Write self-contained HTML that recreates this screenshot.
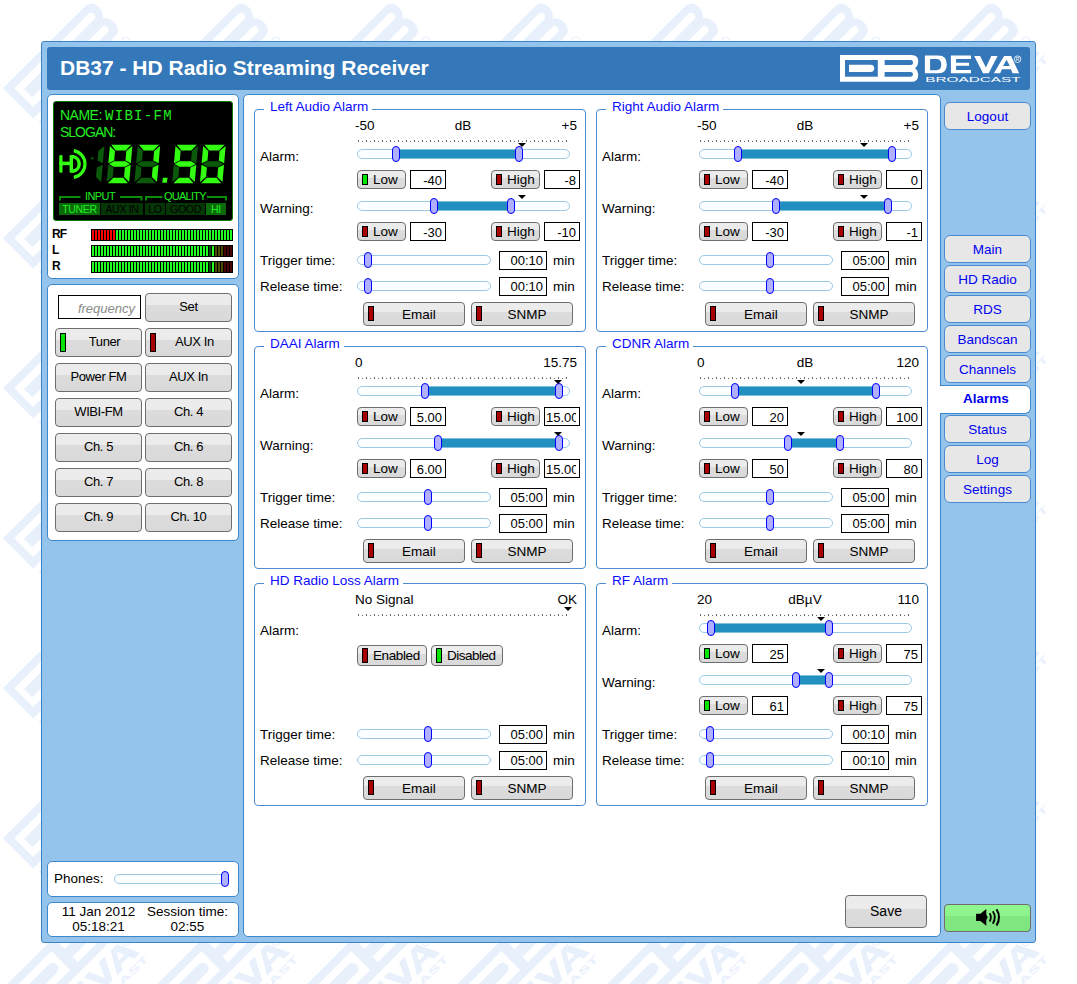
<!DOCTYPE html><html><head><meta charset="utf-8"><style>
*{box-sizing:border-box;margin:0;padding:0}
html,body{width:1077px;height:984px;overflow:hidden;background:#fff;font-family:"Liberation Sans", sans-serif;font-size:13px;color:#000}
.a{position:absolute}
.t{position:absolute;white-space:nowrap;line-height:1}
.btn{position:absolute;border:1px solid #6e6e6e;border-radius:4px;background:linear-gradient(#ececec 0,#ebebeb 42%,#dcdcdc 42%,#d9d9d9 100%);}
.nav{position:absolute;left:944px;width:87px;height:28px;border:1px solid #4a8ad0;border-radius:6px;background:#e7e7e7;color:#0000f0;font-size:13.5px;text-align:center;line-height:27px}
.led{position:absolute;border:1px solid #000}
.red{background:#a80000}
.grn{background:#00e600}
.fs{position:absolute;width:332px;height:223px;border:1px solid #4b8dcf;border-radius:4px}
.lg{position:absolute;top:-9px;background:#fff;color:#0a0aff;padding:0 4px 0 5px;line-height:16px;font-size:13px;white-space:nowrap}
.trk{position:absolute;height:10px;border:1px solid #9ccae6;border-radius:5px;background:#fcfeff}
.fill{position:absolute;height:10px;background:#2190c0;border-top:1px solid #7fbedd;border-bottom:1px solid #7fbedd}
.th{position:absolute;width:8px;height:16px;border:1px solid #0000ff;border-radius:4px;background:#b0b0ff}
.val{position:absolute;height:19px;border:1px solid #000;background:#fff;text-align:right;padding-right:3px;line-height:18px;font-size:13px;white-space:nowrap;overflow:hidden}
.dots{position:absolute;height:1px;background:repeating-linear-gradient(90deg,#666 0,#666 1px,transparent 1px,transparent 8px);}
.dots2{position:absolute;height:1px;background:repeating-linear-gradient(90deg,#666 0,#666 1px,transparent 1px,transparent 4px);}
.tri{position:absolute;width:8px;height:4px;background:#000;clip-path:polygon(0 0,100% 0,50% 100%)}
</style></head><body>
<svg class="a" style="left:0;top:0" width="1077" height="984"><defs><g id="wmb" transform="rotate(-45) scale(1.6) translate(-840,-55.1)"><path d="M840 55.1 H911.5 Q918.2 55.1 918.2 61.5 Q918.2 65.8 915 68.3 Q918.2 70.8 918.2 75.2 Q918.2 81.8 911.5 81.8 H840 Z" fill="#e8f0fc"/><rect x="845" y="60" width="32.8" height="16.7" fill="#ffffff"/><path d="M849 64.7 H870.6 A3.65 3.65 0 0 1 870.6 72 H849 Z" fill="#e8f0fc"/><path d="M884.6 60 H910.5 A2.5 2.5 0 0 1 910.5 65 H884.6 Z" fill="#ffffff"/><path d="M884.6 71.9 H910.6 A2.4 2.4 0 0 1 910.6 76.7 H884.6 Z" fill="#ffffff"/></g><g id="wmt" transform="rotate(-45) scale(1.28) translate(-1006.5,-63.5)"><path fill-rule="evenodd" d="M924.9 55.6 H938.5 Q946.8 55.6 946.8 64.45 Q946.8 73.3 938.5 73.3 H924.9 Z M930.1 59 H936.3 Q941.3 59 941.3 64.6 Q941.3 70.2 936.3 70.2 H930.1 Z" fill="#e8f0fc"/><path d="M950.9 55.6 H971 V59 H956.1 V62.7 H969.1 V65.8 H956.1 V69.9 H971 V73.3 H950.9 Z" fill="#e8f0fc"/><path d="M974.2 55.9 H980.1 L985.9 67.6 L991.3 55.9 H997.6 L988.7 73.3 H983 Z" fill="#e8f0fc"/><path fill-rule="evenodd" d="M1004.1 55.9 H1011.1 L1019.1 73.3 H1012.6 L1010.9 69.2 H1001.9 L1000.2 73.3 H993.9 Z M1003 66 H1009.8 L1006.6 59.8 Z" fill="#e8f0fc"/><circle cx="1017.6" cy="59.2" r="3.3" fill="none" stroke="#e8f0fc" stroke-width="1"/><text x="925.2" y="81.9" font-family="Liberation Sans" font-size="7" font-weight="bold" fill="#e8f0fc" textLength="95.5" lengthAdjust="spacingAndGlyphs" transform="translate(0,-6.2) scale(1,1.076)">BROADCAST</text></g><pattern id="wm" x="0" y="0" width="150" height="150" patternUnits="userSpaceOnUse"><use href="#wmb" transform="translate(-297,-211.7)"/><use href="#wmt" transform="translate(-180.3,-244.7)"/><use href="#wmb" transform="translate(-297,-61.7)"/><use href="#wmt" transform="translate(-180.3,-94.7)"/><use href="#wmb" transform="translate(-297,88.3)"/><use href="#wmt" transform="translate(-180.3,55.3)"/><use href="#wmb" transform="translate(-297,238.3)"/><use href="#wmt" transform="translate(-180.3,205.3)"/><use href="#wmb" transform="translate(-297,388.3)"/><use href="#wmt" transform="translate(-180.3,355.3)"/><use href="#wmb" transform="translate(-147,-211.7)"/><use href="#wmt" transform="translate(-30.299999999999997,-244.7)"/><use href="#wmb" transform="translate(-147,-61.7)"/><use href="#wmt" transform="translate(-30.299999999999997,-94.7)"/><use href="#wmb" transform="translate(-147,88.3)"/><use href="#wmt" transform="translate(-30.299999999999997,55.3)"/><use href="#wmb" transform="translate(-147,238.3)"/><use href="#wmt" transform="translate(-30.299999999999997,205.3)"/><use href="#wmb" transform="translate(-147,388.3)"/><use href="#wmt" transform="translate(-30.299999999999997,355.3)"/><use href="#wmb" transform="translate(3,-211.7)"/><use href="#wmt" transform="translate(119.7,-244.7)"/><use href="#wmb" transform="translate(3,-61.7)"/><use href="#wmt" transform="translate(119.7,-94.7)"/><use href="#wmb" transform="translate(3,88.3)"/><use href="#wmt" transform="translate(119.7,55.3)"/><use href="#wmb" transform="translate(3,238.3)"/><use href="#wmt" transform="translate(119.7,205.3)"/><use href="#wmb" transform="translate(3,388.3)"/><use href="#wmt" transform="translate(119.7,355.3)"/><use href="#wmb" transform="translate(153,-211.7)"/><use href="#wmt" transform="translate(269.7,-244.7)"/><use href="#wmb" transform="translate(153,-61.7)"/><use href="#wmt" transform="translate(269.7,-94.7)"/><use href="#wmb" transform="translate(153,88.3)"/><use href="#wmt" transform="translate(269.7,55.3)"/><use href="#wmb" transform="translate(153,238.3)"/><use href="#wmt" transform="translate(269.7,205.3)"/><use href="#wmb" transform="translate(153,388.3)"/><use href="#wmt" transform="translate(269.7,355.3)"/><use href="#wmb" transform="translate(303,-211.7)"/><use href="#wmt" transform="translate(419.7,-244.7)"/><use href="#wmb" transform="translate(303,-61.7)"/><use href="#wmt" transform="translate(419.7,-94.7)"/><use href="#wmb" transform="translate(303,88.3)"/><use href="#wmt" transform="translate(419.7,55.3)"/><use href="#wmb" transform="translate(303,238.3)"/><use href="#wmt" transform="translate(419.7,205.3)"/><use href="#wmb" transform="translate(303,388.3)"/><use href="#wmt" transform="translate(419.7,355.3)"/></pattern></defs><rect width="1050" height="984" fill="url(#wm)"/></svg>
<div class="a" style="left:41px;top:41px;width:995px;height:902px;border:1px solid #3a83c8;border-radius:3px;background:#94c3ec"></div>
<div class="a" style="left:47px;top:47px;width:983px;height:43px;background:#3478ba;border-radius:3px"></div>
<div class="t" style="left:60px;top:57px;font-size:21px;font-weight:bold;color:#fff;">DB37 - HD Radio Streaming Receiver</div>
<svg class="a" style="left:830px;top:50px" width="200" height="36" viewBox="830 50 200 36"><path d="M840 55.1 H911.5 Q918.2 55.1 918.2 61.5 Q918.2 65.8 915 68.3 Q918.2 70.8 918.2 75.2 Q918.2 81.8 911.5 81.8 H840 Z" fill="#ffffff"/><rect x="845" y="60" width="32.8" height="16.7" fill="#3478ba"/><path d="M849 64.7 H870.6 A3.65 3.65 0 0 1 870.6 72 H849 Z" fill="#ffffff"/><path d="M884.6 60 H910.5 A2.5 2.5 0 0 1 910.5 65 H884.6 Z" fill="#3478ba"/><path d="M884.6 71.9 H910.6 A2.4 2.4 0 0 1 910.6 76.7 H884.6 Z" fill="#3478ba"/><path fill-rule="evenodd" d="M924.9 55.6 H938.5 Q946.8 55.6 946.8 64.45 Q946.8 73.3 938.5 73.3 H924.9 Z M930.1 59 H936.3 Q941.3 59 941.3 64.6 Q941.3 70.2 936.3 70.2 H930.1 Z" fill="#ffffff"/><path d="M950.9 55.6 H971 V59 H956.1 V62.7 H969.1 V65.8 H956.1 V69.9 H971 V73.3 H950.9 Z" fill="#ffffff"/><path d="M974.2 55.9 H980.1 L985.9 67.6 L991.3 55.9 H997.6 L988.7 73.3 H983 Z" fill="#ffffff"/><path fill-rule="evenodd" d="M1004.1 55.9 H1011.1 L1019.1 73.3 H1012.6 L1010.9 69.2 H1001.9 L1000.2 73.3 H993.9 Z M1003 66 H1009.8 L1006.6 59.8 Z" fill="#ffffff"/><circle cx="1017.6" cy="59.2" r="3.3" fill="none" stroke="#ffffff" stroke-width="0.8"/><text x="1017.6" y="61.4" font-family="Liberation Sans" font-size="5" fill="#ffffff" text-anchor="middle">R</text><text x="925.2" y="81.9" font-family="Liberation Sans" font-size="7" fill="#ffffff" textLength="95.5" lengthAdjust="spacingAndGlyphs" transform="translate(0,-6.2) scale(1,1.076)">BROADCAST</text></svg>
<div class="a" style="left:47px;top:94px;width:192px;height:185px;border:1px solid #3d87cc;border-radius:5px;background:#fff;"></div>
<div class="a" style="left:47px;top:284px;width:192px;height:257px;border:1px solid #3d87cc;border-radius:5px;background:#fff;"></div>
<div class="a" style="left:47px;top:861px;width:192px;height:36px;border:1px solid #3d87cc;border-radius:5px;background:#fff;"></div>
<div class="a" style="left:47px;top:902px;width:192px;height:35px;border:1px solid #3d87cc;border-radius:5px;background:#fff;"></div>
<div class="a" style="left:243px;top:94px;width:698px;height:843px;border:1px solid #3d87cc;border-radius:5px;background:#fff;"></div>
<div class="nav" style="top:102px">Logout</div>
<div class="nav" style="top:235px">Main</div>
<div class="nav" style="top:265px">HD Radio</div>
<div class="nav" style="top:295px">RDS</div>
<div class="nav" style="top:325px">Bandscan</div>
<div class="nav" style="top:355px">Channels</div>
<div class="nav" style="top:415px">Status</div>
<div class="nav" style="top:445px">Log</div>
<div class="nav" style="top:475px">Settings</div>
<div class="a" style="left:940px;top:385px;width:91px;height:29px;border:1px solid #3d87cc;border-left:none;border-radius:0 6px 6px 0;background:#fff"></div>
<div class="a" style="left:938px;top:386px;width:8px;height:27px;background:#fff"></div>
<div class="t" style="left:941px;top:392px;width:90px;text-align:center;font-size:13.5px;font-weight:bold;color:#0000f0">Alarms</div>
<div class="a" style="left:944px;top:904px;width:87px;height:28px;border:1px solid #6e6e6e;border-radius:4px;background:linear-gradient(#90f690 0,#8df48d 42%,#82e882 42%,#7ee67e 100%)"></div>
<svg class="a" style="left:960px;top:900px" width="55" height="35" viewBox="960 900 55 35"><path d="M976.1 913.8 H980.4 L986.3 908.9 V925.8 L980.4 920.9 H976.1 Z" fill="#000"/><path d="M986 914.5 L987.8 917.3 L986 920.2 Z" fill="#000"/><path d="M989.6 913.3 Q992.2 917.3 989.6 921.4" fill="none" stroke="#000" stroke-width="1.8"/><path d="M992.8 911.3 Q996.8 917.3 992.8 923.7" fill="none" stroke="#000" stroke-width="1.9"/><path d="M996.5 909.2 Q1001.6 917.3 996.5 925.5" fill="none" stroke="#000" stroke-width="2"/></svg>
<div class="btn" style="left:845px;top:895px;width:82px;height:33px"></div>
<div class="t" style="left:845px;top:904px;width:82px;text-align:center;font-size:14px">Save</div>
<div class="a" style="left:53px;top:101px;width:180px;height:120px;background:#000;border:1px solid #0b7a0b;border-radius:3px"></div><div class="t" style="left:60px;top:108px;font-size:14px;color:#22ee22;letter-spacing:-0.5px">NAME:</div><div class="t" style="left:105px;top:109px;font-family:'Liberation Mono',monospace;font-size:14px;letter-spacing:1.3px;color:#22ee22">WIBI-FM</div><div class="t" style="left:60px;top:125px;font-size:14px;color:#22ee22;letter-spacing:-1px">SLOGAN:</div><svg class="a" style="left:0;top:0" width="240" height="230"><rect x="59.3" y="155" width="3.2" height="17.8" rx="1.4" fill="#33ff11"/><rect x="69.6" y="155" width="3.4" height="17.8" rx="1.2" fill="#33ff11"/><rect x="59.3" y="161.6" width="12" height="3.6" fill="#33ff11"/><path d="M71.5 156.7 L73.5 156.7 A7.4 7.4 0 0 1 73.5 171.1 L71.5 171.1" fill="none" stroke="#33ff11" stroke-width="3.4"/><path d="M73.8 150.7 A13.5 13.5 0 0 1 73.8 177.3" fill="none" stroke="#33ff11" stroke-width="3.2"/><circle cx="92.3" cy="158.3" r="1.3" fill="#0b5a0b"/><polygon points="104.36,146.00 102.85,163.35 97.49,160.55 98.32,151.10" fill="#0b5a0b"/><polygon points="102.72,164.75 101.20,182.10 96.05,177.00 96.88,167.55" fill="#0b5a0b"/><polygon points="111.17,144.80 131.27,144.80 125.68,150.40 115.78,150.40" fill="#33ff11"/><polygon points="109.86,146.00 115.02,151.10 114.19,160.55 108.35,163.35" fill="#33ff11"/><polygon points="132.36,146.00 130.85,163.35 125.49,160.55 126.32,151.10" fill="#33ff11"/><polygon points="108.98,164.05 114.13,161.25 125.43,161.25 130.08,164.05 124.94,166.85 113.64,166.85" fill="#33ff11"/><polygon points="108.22,164.75 113.58,167.55 112.75,177.00 106.70,182.10" fill="#0b5a0b"/><polygon points="130.72,164.75 129.20,182.10 124.05,177.00 124.88,167.55" fill="#33ff11"/><polygon points="107.80,183.30 113.39,177.70 123.29,177.70 127.90,183.30" fill="#33ff11"/><polygon points="138.97,144.80 159.07,144.80 153.48,150.40 143.58,150.40" fill="#33ff11"/><polygon points="137.66,146.00 142.82,151.10 141.99,160.55 136.15,163.35" fill="#0b5a0b"/><polygon points="160.16,146.00 158.65,163.35 153.29,160.55 154.12,151.10" fill="#33ff11"/><polygon points="136.78,164.05 141.93,161.25 153.23,161.25 157.88,164.05 152.74,166.85 141.44,166.85" fill="#0b5a0b"/><polygon points="136.02,164.75 141.38,167.55 140.55,177.00 134.50,182.10" fill="#0b5a0b"/><polygon points="158.52,164.75 157.00,182.10 151.85,177.00 152.68,167.55" fill="#33ff11"/><polygon points="135.60,183.30 141.19,177.70 151.09,177.70 155.70,183.30" fill="#0b5a0b"/><polygon points="163,177.8 167.6,177.8 166.8,182.8 162.2,182.8" fill="#33ff11"/><polygon points="176.77,144.80 196.87,144.80 191.28,150.40 181.38,150.40" fill="#33ff11"/><polygon points="175.46,146.00 180.62,151.10 179.79,160.55 173.95,163.35" fill="#33ff11"/><polygon points="197.96,146.00 196.45,163.35 191.09,160.55 191.92,151.10" fill="#0b5a0b"/><polygon points="174.58,164.05 179.73,161.25 191.03,161.25 195.68,164.05 190.54,166.85 179.24,166.85" fill="#33ff11"/><polygon points="173.82,164.75 179.18,167.55 178.35,177.00 172.30,182.10" fill="#0b5a0b"/><polygon points="196.32,164.75 194.80,182.10 189.65,177.00 190.48,167.55" fill="#33ff11"/><polygon points="173.40,183.30 178.99,177.70 188.89,177.70 193.50,183.30" fill="#33ff11"/><polygon points="204.47,144.80 224.57,144.80 218.98,150.40 209.08,150.40" fill="#33ff11"/><polygon points="203.16,146.00 208.32,151.10 207.49,160.55 201.65,163.35" fill="#33ff11"/><polygon points="225.66,146.00 224.15,163.35 218.79,160.55 219.62,151.10" fill="#33ff11"/><polygon points="202.28,164.05 207.43,161.25 218.73,161.25 223.38,164.05 218.24,166.85 206.94,166.85" fill="#0b5a0b"/><polygon points="201.52,164.75 206.88,167.55 206.05,177.00 200.00,182.10" fill="#33ff11"/><polygon points="224.02,164.75 222.50,182.10 217.35,177.00 218.18,167.55" fill="#33ff11"/><polygon points="201.10,183.30 206.69,177.70 216.59,177.70 221.20,183.30" fill="#33ff11"/><path d="M60 200.5 V197 H80.5 M120 197 H141.5 V200.5" fill="none" stroke="#0b8a0b" stroke-width="2"/><path d="M146 200.5 V197 H162.5 M207 197 H226 V200.5" fill="none" stroke="#0b8a0b" stroke-width="2"/></svg><div class="t" style="left:85px;top:191px;font-size:11px;color:#22ee22;letter-spacing:-0.6px">INPUT</div><div class="t" style="left:164px;top:191px;font-size:11px;color:#22ee22;letter-spacing:-0.75px">QUALITY</div><div class="t" style="left:59px;top:203px;width:41px;height:12px;background:#0a6a0a;color:#22ee22;font-size:10.5px;line-height:12px;text-align:center;letter-spacing:-0.3px">TUNER</div><div class="t" style="left:101px;top:203px;width:42px;height:12px;background:#053605;color:#000;font-size:10.5px;line-height:12px;text-align:center;letter-spacing:-0.3px">AUX IN</div><div class="t" style="left:145px;top:203px;width:20px;height:12px;background:#053605;color:#000;font-size:10.5px;line-height:12px;text-align:center;letter-spacing:-0.3px">LO</div><div class="t" style="left:166px;top:203px;width:39px;height:12px;background:#053605;color:#000;font-size:10.5px;line-height:12px;text-align:center;letter-spacing:-0.3px">GOOD</div><div class="t" style="left:206px;top:203px;width:20px;height:12px;background:#0a6a0a;color:#22ee22;font-size:10.5px;line-height:12px;text-align:center;letter-spacing:-0.3px">HI</div><div class="t" style="left:52px;top:228px;font-size:12px;font-weight:bold;letter-spacing:-0.8px">RF</div><svg class="a" style="left:91px;top:229px" width="142" height="12"><rect width="142" height="12" fill="#000"/><rect x="1" y="1" width="2" height="10" fill="#ff0000"/><rect x="4" y="1" width="2" height="10" fill="#ff0000"/><rect x="7" y="1" width="2" height="10" fill="#ff0000"/><rect x="10" y="1" width="2" height="10" fill="#ff0000"/><rect x="13" y="1" width="2" height="10" fill="#ff0000"/><rect x="16" y="1" width="2" height="10" fill="#ff0000"/><rect x="19" y="1" width="2" height="10" fill="#ff0000"/><rect x="22" y="1" width="2" height="10" fill="#ff0000"/><rect x="25" y="1" width="2" height="10" fill="#22ff22"/><rect x="28" y="1" width="2" height="10" fill="#22ff22"/><rect x="31" y="1" width="2" height="10" fill="#22ff22"/><rect x="34" y="1" width="2" height="10" fill="#22ff22"/><rect x="37" y="1" width="2" height="10" fill="#22ff22"/><rect x="40" y="1" width="2" height="10" fill="#22ff22"/><rect x="43" y="1" width="2" height="10" fill="#22ff22"/><rect x="46" y="1" width="2" height="10" fill="#22ff22"/><rect x="49" y="1" width="2" height="10" fill="#22ff22"/><rect x="52" y="1" width="2" height="10" fill="#22ff22"/><rect x="55" y="1" width="2" height="10" fill="#22ff22"/><rect x="58" y="1" width="2" height="10" fill="#22ff22"/><rect x="61" y="1" width="2" height="10" fill="#22ff22"/><rect x="64" y="1" width="2" height="10" fill="#22ff22"/><rect x="67" y="1" width="2" height="10" fill="#22ff22"/><rect x="70" y="1" width="2" height="10" fill="#22ff22"/><rect x="73" y="1" width="2" height="10" fill="#22ff22"/><rect x="76" y="1" width="2" height="10" fill="#22ff22"/><rect x="79" y="1" width="2" height="10" fill="#22ff22"/><rect x="82" y="1" width="2" height="10" fill="#22ff22"/><rect x="85" y="1" width="2" height="10" fill="#22ff22"/><rect x="88" y="1" width="2" height="10" fill="#22ff22"/><rect x="91" y="1" width="2" height="10" fill="#22ff22"/><rect x="94" y="1" width="2" height="10" fill="#22ff22"/><rect x="97" y="1" width="2" height="10" fill="#22ff22"/><rect x="100" y="1" width="2" height="10" fill="#22ff22"/><rect x="103" y="1" width="2" height="10" fill="#22ff22"/><rect x="106" y="1" width="2" height="10" fill="#22ff22"/><rect x="109" y="1" width="2" height="10" fill="#22ff22"/><rect x="112" y="1" width="2" height="10" fill="#22ff22"/><rect x="115" y="1" width="2" height="10" fill="#22ff22"/><rect x="118" y="1" width="2" height="10" fill="#22ff22"/><rect x="121" y="1" width="2" height="10" fill="#22ff22"/><rect x="124" y="1" width="2" height="10" fill="#22ff22"/><rect x="127" y="1" width="2" height="10" fill="#22ff22"/><rect x="130" y="1" width="2" height="10" fill="#22ff22"/><rect x="133" y="1" width="2" height="10" fill="#22ff22"/><rect x="136" y="1" width="2" height="10" fill="#22ff22"/><rect x="139" y="1" width="2" height="10" fill="#22ff22"/></svg><div class="t" style="left:52px;top:244px;font-size:12px;font-weight:bold;letter-spacing:-0.8px">L</div><svg class="a" style="left:91px;top:245px" width="142" height="12"><rect width="142" height="12" fill="#000"/><rect x="1" y="1" width="2" height="10" fill="#22ff22"/><rect x="4" y="1" width="2" height="10" fill="#22ff22"/><rect x="7" y="1" width="2" height="10" fill="#22ff22"/><rect x="10" y="1" width="2" height="10" fill="#22ff22"/><rect x="13" y="1" width="2" height="10" fill="#22ff22"/><rect x="16" y="1" width="2" height="10" fill="#22ff22"/><rect x="19" y="1" width="2" height="10" fill="#22ff22"/><rect x="22" y="1" width="2" height="10" fill="#22ff22"/><rect x="25" y="1" width="2" height="10" fill="#22ff22"/><rect x="28" y="1" width="2" height="10" fill="#22ff22"/><rect x="31" y="1" width="2" height="10" fill="#22ff22"/><rect x="34" y="1" width="2" height="10" fill="#22ff22"/><rect x="37" y="1" width="2" height="10" fill="#22ff22"/><rect x="40" y="1" width="2" height="10" fill="#22ff22"/><rect x="43" y="1" width="2" height="10" fill="#22ff22"/><rect x="46" y="1" width="2" height="10" fill="#22ff22"/><rect x="49" y="1" width="2" height="10" fill="#22ff22"/><rect x="52" y="1" width="2" height="10" fill="#22ff22"/><rect x="55" y="1" width="2" height="10" fill="#22ff22"/><rect x="58" y="1" width="2" height="10" fill="#22ff22"/><rect x="61" y="1" width="2" height="10" fill="#22ff22"/><rect x="64" y="1" width="2" height="10" fill="#22ff22"/><rect x="67" y="1" width="2" height="10" fill="#22ff22"/><rect x="70" y="1" width="2" height="10" fill="#22ff22"/><rect x="73" y="1" width="2" height="10" fill="#22ff22"/><rect x="76" y="1" width="2" height="10" fill="#22ff22"/><rect x="79" y="1" width="2" height="10" fill="#22ff22"/><rect x="82" y="1" width="2" height="10" fill="#22ff22"/><rect x="85" y="1" width="2" height="10" fill="#22ff22"/><rect x="88" y="1" width="2" height="10" fill="#22ff22"/><rect x="91" y="1" width="2" height="10" fill="#22ff22"/><rect x="94" y="1" width="2" height="10" fill="#22ff22"/><rect x="97" y="1" width="2" height="10" fill="#22ff22"/><rect x="100" y="1" width="2" height="10" fill="#22ff22"/><rect x="103" y="1" width="2" height="10" fill="#22ff22"/><rect x="106" y="1" width="2" height="10" fill="#22ff22"/><rect x="109" y="1" width="2" height="10" fill="#22ff22"/><rect x="112" y="1" width="2" height="10" fill="#22ff22"/><rect x="115" y="1" width="2" height="10" fill="#22ff22"/><rect x="118" y="1" width="2" height="10" fill="#0d4a0d"/><rect x="121" y="1" width="2" height="10" fill="#22ff22"/><rect x="124" y="1" width="2" height="10" fill="#4d4a05"/><rect x="127" y="1" width="2" height="10" fill="#4d4a05"/><rect x="130" y="1" width="2" height="10" fill="#4d4a05"/><rect x="133" y="1" width="2" height="10" fill="#4a0505"/><rect x="136" y="1" width="2" height="10" fill="#4a0505"/><rect x="139" y="1" width="2" height="10" fill="#4a0505"/></svg><div class="t" style="left:52px;top:260px;font-size:12px;font-weight:bold;letter-spacing:-0.8px">R</div><svg class="a" style="left:91px;top:261px" width="142" height="12"><rect width="142" height="12" fill="#000"/><rect x="1" y="1" width="2" height="10" fill="#22ff22"/><rect x="4" y="1" width="2" height="10" fill="#22ff22"/><rect x="7" y="1" width="2" height="10" fill="#22ff22"/><rect x="10" y="1" width="2" height="10" fill="#22ff22"/><rect x="13" y="1" width="2" height="10" fill="#22ff22"/><rect x="16" y="1" width="2" height="10" fill="#22ff22"/><rect x="19" y="1" width="2" height="10" fill="#22ff22"/><rect x="22" y="1" width="2" height="10" fill="#22ff22"/><rect x="25" y="1" width="2" height="10" fill="#22ff22"/><rect x="28" y="1" width="2" height="10" fill="#22ff22"/><rect x="31" y="1" width="2" height="10" fill="#22ff22"/><rect x="34" y="1" width="2" height="10" fill="#22ff22"/><rect x="37" y="1" width="2" height="10" fill="#22ff22"/><rect x="40" y="1" width="2" height="10" fill="#22ff22"/><rect x="43" y="1" width="2" height="10" fill="#22ff22"/><rect x="46" y="1" width="2" height="10" fill="#22ff22"/><rect x="49" y="1" width="2" height="10" fill="#22ff22"/><rect x="52" y="1" width="2" height="10" fill="#22ff22"/><rect x="55" y="1" width="2" height="10" fill="#22ff22"/><rect x="58" y="1" width="2" height="10" fill="#22ff22"/><rect x="61" y="1" width="2" height="10" fill="#22ff22"/><rect x="64" y="1" width="2" height="10" fill="#22ff22"/><rect x="67" y="1" width="2" height="10" fill="#22ff22"/><rect x="70" y="1" width="2" height="10" fill="#22ff22"/><rect x="73" y="1" width="2" height="10" fill="#22ff22"/><rect x="76" y="1" width="2" height="10" fill="#22ff22"/><rect x="79" y="1" width="2" height="10" fill="#22ff22"/><rect x="82" y="1" width="2" height="10" fill="#22ff22"/><rect x="85" y="1" width="2" height="10" fill="#22ff22"/><rect x="88" y="1" width="2" height="10" fill="#22ff22"/><rect x="91" y="1" width="2" height="10" fill="#22ff22"/><rect x="94" y="1" width="2" height="10" fill="#22ff22"/><rect x="97" y="1" width="2" height="10" fill="#22ff22"/><rect x="100" y="1" width="2" height="10" fill="#22ff22"/><rect x="103" y="1" width="2" height="10" fill="#22ff22"/><rect x="106" y="1" width="2" height="10" fill="#22ff22"/><rect x="109" y="1" width="2" height="10" fill="#22ff22"/><rect x="112" y="1" width="2" height="10" fill="#22ff22"/><rect x="115" y="1" width="2" height="10" fill="#22ff22"/><rect x="118" y="1" width="2" height="10" fill="#0d4a0d"/><rect x="121" y="1" width="2" height="10" fill="#22ff22"/><rect x="124" y="1" width="2" height="10" fill="#4d4a05"/><rect x="127" y="1" width="2" height="10" fill="#4d4a05"/><rect x="130" y="1" width="2" height="10" fill="#4d4a05"/><rect x="133" y="1" width="2" height="10" fill="#4a0505"/><rect x="136" y="1" width="2" height="10" fill="#4a0505"/><rect x="139" y="1" width="2" height="10" fill="#4a0505"/></svg><div class="a" style="left:58px;top:295px;width:83px;height:24px;border:1px solid #000;background:#fff"></div><div class="t" style="left:58px;top:302px;font-size:13px;width:77px;text-align:right;font-style:italic;color:#8a8a8a">frequency</div><div class="btn" style="left:145px;top:293px;width:87px;height:29px"></div><div class="t" style="left:145px;top:300px;font-size:13px;width:87px;text-align:center;letter-spacing:-0.4px">Set</div><div class="btn" style="left:55px;top:328px;width:87px;height:29px"></div><div class="led grn" style="left:60px;top:333px;width:6px;height:19px"></div><div class="t" style="left:67px;top:335px;font-size:13px;width:75px;text-align:center;letter-spacing:-0.4px">Tuner</div><div class="btn" style="left:145px;top:328px;width:87px;height:29px"></div><div class="led red" style="left:150px;top:333px;width:6px;height:19px"></div><div class="t" style="left:157px;top:335px;font-size:13px;width:75px;text-align:center;letter-spacing:-0.4px">AUX In</div><div class="btn" style="left:55px;top:363px;width:87px;height:29px"></div><div class="t" style="left:55px;top:370px;font-size:13px;width:87px;text-align:center;letter-spacing:-0.4px">Power FM</div><div class="btn" style="left:145px;top:363px;width:87px;height:29px"></div><div class="t" style="left:145px;top:370px;font-size:13px;width:87px;text-align:center;letter-spacing:-0.4px">AUX In</div><div class="btn" style="left:55px;top:398px;width:87px;height:29px"></div><div class="t" style="left:55px;top:405px;font-size:13px;width:87px;text-align:center;letter-spacing:-0.4px">WIBI-FM</div><div class="btn" style="left:145px;top:398px;width:87px;height:29px"></div><div class="t" style="left:145px;top:405px;font-size:13px;width:87px;text-align:center;letter-spacing:-0.4px">Ch. 4</div><div class="btn" style="left:55px;top:433px;width:87px;height:29px"></div><div class="t" style="left:55px;top:440px;font-size:13px;width:87px;text-align:center;letter-spacing:-0.4px">Ch. 5</div><div class="btn" style="left:145px;top:433px;width:87px;height:29px"></div><div class="t" style="left:145px;top:440px;font-size:13px;width:87px;text-align:center;letter-spacing:-0.4px">Ch. 6</div><div class="btn" style="left:55px;top:468px;width:87px;height:29px"></div><div class="t" style="left:55px;top:475px;font-size:13px;width:87px;text-align:center;letter-spacing:-0.4px">Ch. 7</div><div class="btn" style="left:145px;top:468px;width:87px;height:29px"></div><div class="t" style="left:145px;top:475px;font-size:13px;width:87px;text-align:center;letter-spacing:-0.4px">Ch. 8</div><div class="btn" style="left:55px;top:503px;width:87px;height:29px"></div><div class="t" style="left:55px;top:510px;font-size:13px;width:87px;text-align:center;letter-spacing:-0.4px">Ch. 9</div><div class="btn" style="left:145px;top:503px;width:87px;height:29px"></div><div class="t" style="left:145px;top:510px;font-size:13px;width:87px;text-align:center;letter-spacing:-0.4px">Ch. 10</div><div class="t" style="left:54px;top:872px;font-size:13.5px;">Phones:</div><div class="trk" style="left:114px;top:874px;width:115px;height:10px"></div><div class="th" style="left:221px;top:871px;height:16px"></div><div class="t" style="left:47px;top:905px;font-size:13.5px;width:103px;text-align:center;">11 Jan 2012</div><div class="t" style="left:47px;top:920px;font-size:13.5px;width:103px;text-align:center;">05:18:21</div><div class="t" style="left:138px;top:905px;font-size:13.5px;width:99px;text-align:center;">Session time:</div><div class="t" style="left:138px;top:920px;font-size:13.5px;width:99px;text-align:center;">02:55</div>
<div class="fs" style="left:254px;top:109px"></div><div class="t" style="left:264px;top:100px;font-size:13.5px;background:#fff;color:#0a0aff;padding:0 4px 0 6px;line-height:14px;">Left Audio Alarm</div><div class="t" style="left:355px;top:119px;font-size:13.5px;">-50</div><div class="t" style="left:413px;top:119px;font-size:13.5px;width:100px;text-align:center;">dB</div><div class="t" style="left:477px;top:119px;font-size:13.5px;width:100px;text-align:right;">+5</div><div class="dots" style="left:358px;top:140px;width:209px"></div><div class="dots2" style="left:358px;top:141px;width:209px"></div><div class="t" style="left:260px;top:150px;font-size:13.5px;">Alarm:</div><div class="t" style="left:260px;top:202px;font-size:13.5px;">Warning:</div><div class="trk" style="left:357px;top:149px;width:213px"></div><div class="fill" style="left:396px;top:149px;width:123px"></div><div class="th" style="left:392px;top:146px"></div><div class="th" style="left:515px;top:146px"></div><div class="tri" style="left:518.0px;top:143px"></div><div class="btn" style="left:357px;top:170px;width:49px;height:19px"></div><div class="led grn" style="left:362px;top:174px;width:6px;height:11px"></div><div class="t" style="left:373px;top:173px;font-size:13.5px;">Low</div><div class="val" style="left:410px;top:170px;width:36px"></div><div class="t" style="left:410px;top:174px;font-size:13px;width:36px;text-align:right;padding-right:4px;overflow:hidden;height:15px">-40</div><div class="btn" style="left:491px;top:170px;width:49px;height:19px"></div><div class="led red" style="left:496px;top:174px;width:6px;height:11px"></div><div class="t" style="left:507px;top:173px;font-size:13.5px;">High</div><div class="val" style="left:544px;top:170px;width:36px"></div><div class="t" style="left:544px;top:174px;font-size:13px;width:36px;text-align:right;padding-right:4px;overflow:hidden;height:15px">-8</div><div class="trk" style="left:357px;top:201px;width:213px"></div><div class="fill" style="left:434px;top:201px;width:77px"></div><div class="th" style="left:430px;top:198px"></div><div class="th" style="left:507px;top:198px"></div><div class="tri" style="left:518.0px;top:195px"></div><div class="btn" style="left:357px;top:222px;width:49px;height:19px"></div><div class="led red" style="left:362px;top:226px;width:6px;height:11px"></div><div class="t" style="left:373px;top:225px;font-size:13.5px;">Low</div><div class="val" style="left:410px;top:222px;width:36px"></div><div class="t" style="left:410px;top:226px;font-size:13px;width:36px;text-align:right;padding-right:4px;overflow:hidden;height:15px">-30</div><div class="btn" style="left:491px;top:222px;width:49px;height:19px"></div><div class="led red" style="left:496px;top:226px;width:6px;height:11px"></div><div class="t" style="left:507px;top:225px;font-size:13.5px;">High</div><div class="val" style="left:544px;top:222px;width:36px"></div><div class="t" style="left:544px;top:226px;font-size:13px;width:36px;text-align:right;padding-right:4px;overflow:hidden;height:15px">-10</div><div class="t" style="left:260px;top:254px;font-size:13.5px;">Trigger time:</div><div class="trk" style="left:357px;top:255px;width:134px"></div><div class="th" style="left:364px;top:252px"></div><div class="val" style="left:499px;top:251px;width:48px;height:19px"></div><div class="t" style="left:499px;top:254px;font-size:13px;width:48px;text-align:right;padding-right:4px">00:10</div><div class="t" style="left:553px;top:254px;font-size:13.5px;">min</div><div class="t" style="left:260px;top:280px;font-size:13.5px;">Release time:</div><div class="trk" style="left:357px;top:281px;width:134px"></div><div class="th" style="left:364px;top:278px"></div><div class="val" style="left:499px;top:277px;width:48px;height:19px"></div><div class="t" style="left:499px;top:280px;font-size:13px;width:48px;text-align:right;padding-right:4px">00:10</div><div class="t" style="left:553px;top:280px;font-size:13.5px;">min</div><div class="btn" style="left:363px;top:302px;width:102px;height:24px"></div><div class="led red" style="left:368px;top:306px;width:6px;height:15px"></div><div class="t" style="left:373px;top:308px;font-size:13.5px;width:92px;text-align:center;">Email</div><div class="btn" style="left:471px;top:302px;width:102px;height:24px"></div><div class="led red" style="left:476px;top:306px;width:6px;height:15px"></div><div class="t" style="left:481px;top:308px;font-size:13.5px;width:92px;text-align:center;">SNMP</div><div class="fs" style="left:596px;top:109px"></div><div class="t" style="left:606px;top:100px;font-size:13.5px;background:#fff;color:#0a0aff;padding:0 4px 0 6px;line-height:14px;">Right Audio Alarm</div><div class="t" style="left:697px;top:119px;font-size:13.5px;">-50</div><div class="t" style="left:755px;top:119px;font-size:13.5px;width:100px;text-align:center;">dB</div><div class="t" style="left:819px;top:119px;font-size:13.5px;width:100px;text-align:right;">+5</div><div class="dots" style="left:700px;top:140px;width:209px"></div><div class="dots2" style="left:700px;top:141px;width:209px"></div><div class="t" style="left:602px;top:150px;font-size:13.5px;">Alarm:</div><div class="t" style="left:602px;top:202px;font-size:13.5px;">Warning:</div><div class="trk" style="left:699px;top:149px;width:213px"></div><div class="fill" style="left:738px;top:149px;width:154px"></div><div class="th" style="left:734px;top:146px"></div><div class="th" style="left:888px;top:146px"></div><div class="tri" style="left:860.0px;top:143px"></div><div class="btn" style="left:699px;top:170px;width:49px;height:19px"></div><div class="led red" style="left:704px;top:174px;width:6px;height:11px"></div><div class="t" style="left:715px;top:173px;font-size:13.5px;">Low</div><div class="val" style="left:752px;top:170px;width:36px"></div><div class="t" style="left:752px;top:174px;font-size:13px;width:36px;text-align:right;padding-right:4px;overflow:hidden;height:15px">-40</div><div class="btn" style="left:833px;top:170px;width:49px;height:19px"></div><div class="led red" style="left:838px;top:174px;width:6px;height:11px"></div><div class="t" style="left:849px;top:173px;font-size:13.5px;">High</div><div class="val" style="left:886px;top:170px;width:36px"></div><div class="t" style="left:886px;top:174px;font-size:13px;width:36px;text-align:right;padding-right:4px;overflow:hidden;height:15px">0</div><div class="trk" style="left:699px;top:201px;width:213px"></div><div class="fill" style="left:776px;top:201px;width:111px"></div><div class="th" style="left:772px;top:198px"></div><div class="th" style="left:884px;top:198px"></div><div class="tri" style="left:860.0px;top:195px"></div><div class="btn" style="left:699px;top:222px;width:49px;height:19px"></div><div class="led red" style="left:704px;top:226px;width:6px;height:11px"></div><div class="t" style="left:715px;top:225px;font-size:13.5px;">Low</div><div class="val" style="left:752px;top:222px;width:36px"></div><div class="t" style="left:752px;top:226px;font-size:13px;width:36px;text-align:right;padding-right:4px;overflow:hidden;height:15px">-30</div><div class="btn" style="left:833px;top:222px;width:49px;height:19px"></div><div class="led red" style="left:838px;top:226px;width:6px;height:11px"></div><div class="t" style="left:849px;top:225px;font-size:13.5px;">High</div><div class="val" style="left:886px;top:222px;width:36px"></div><div class="t" style="left:886px;top:226px;font-size:13px;width:36px;text-align:right;padding-right:4px;overflow:hidden;height:15px">-1</div><div class="t" style="left:602px;top:254px;font-size:13.5px;">Trigger time:</div><div class="trk" style="left:699px;top:255px;width:134px"></div><div class="th" style="left:766px;top:252px"></div><div class="val" style="left:841px;top:251px;width:48px;height:19px"></div><div class="t" style="left:841px;top:254px;font-size:13px;width:48px;text-align:right;padding-right:4px">05:00</div><div class="t" style="left:895px;top:254px;font-size:13.5px;">min</div><div class="t" style="left:602px;top:280px;font-size:13.5px;">Release time:</div><div class="trk" style="left:699px;top:281px;width:134px"></div><div class="th" style="left:766px;top:278px"></div><div class="val" style="left:841px;top:277px;width:48px;height:19px"></div><div class="t" style="left:841px;top:280px;font-size:13px;width:48px;text-align:right;padding-right:4px">05:00</div><div class="t" style="left:895px;top:280px;font-size:13.5px;">min</div><div class="btn" style="left:705px;top:302px;width:102px;height:24px"></div><div class="led red" style="left:710px;top:306px;width:6px;height:15px"></div><div class="t" style="left:715px;top:308px;font-size:13.5px;width:92px;text-align:center;">Email</div><div class="btn" style="left:813px;top:302px;width:102px;height:24px"></div><div class="led red" style="left:818px;top:306px;width:6px;height:15px"></div><div class="t" style="left:823px;top:308px;font-size:13.5px;width:92px;text-align:center;">SNMP</div><div class="fs" style="left:254px;top:346px"></div><div class="t" style="left:264px;top:337px;font-size:13.5px;background:#fff;color:#0a0aff;padding:0 4px 0 6px;line-height:14px;">DAAI Alarm</div><div class="t" style="left:355px;top:356px;font-size:13.5px;">0</div><div class="t" style="left:477px;top:356px;font-size:13.5px;width:100px;text-align:right;">15.75</div><div class="dots" style="left:358px;top:377px;width:209px"></div><div class="dots2" style="left:358px;top:378px;width:209px"></div><div class="t" style="left:260px;top:387px;font-size:13.5px;">Alarm:</div><div class="t" style="left:260px;top:439px;font-size:13.5px;">Warning:</div><div class="trk" style="left:357px;top:386px;width:213px"></div><div class="fill" style="left:425px;top:386px;width:134px"></div><div class="th" style="left:421px;top:383px"></div><div class="th" style="left:555px;top:383px"></div><div class="tri" style="left:554.0px;top:380px"></div><div class="btn" style="left:357px;top:407px;width:49px;height:19px"></div><div class="led red" style="left:362px;top:411px;width:6px;height:11px"></div><div class="t" style="left:373px;top:410px;font-size:13.5px;">Low</div><div class="val" style="left:410px;top:407px;width:36px"></div><div class="t" style="left:410px;top:411px;font-size:13px;width:36px;text-align:right;padding-right:4px;overflow:hidden;height:15px">5.00</div><div class="btn" style="left:491px;top:407px;width:49px;height:19px"></div><div class="led red" style="left:496px;top:411px;width:6px;height:11px"></div><div class="t" style="left:507px;top:410px;font-size:13.5px;">High</div><div class="val" style="left:544px;top:407px;width:36px"></div><div class="t" style="left:546px;top:411px;font-size:13px;width:30px;overflow:hidden;height:15px">15.00</div><div class="trk" style="left:357px;top:438px;width:213px"></div><div class="fill" style="left:438px;top:438px;width:121px"></div><div class="th" style="left:434px;top:435px"></div><div class="th" style="left:555px;top:435px"></div><div class="tri" style="left:554.0px;top:432px"></div><div class="btn" style="left:357px;top:459px;width:49px;height:19px"></div><div class="led red" style="left:362px;top:463px;width:6px;height:11px"></div><div class="t" style="left:373px;top:462px;font-size:13.5px;">Low</div><div class="val" style="left:410px;top:459px;width:36px"></div><div class="t" style="left:410px;top:463px;font-size:13px;width:36px;text-align:right;padding-right:4px;overflow:hidden;height:15px">6.00</div><div class="btn" style="left:491px;top:459px;width:49px;height:19px"></div><div class="led red" style="left:496px;top:463px;width:6px;height:11px"></div><div class="t" style="left:507px;top:462px;font-size:13.5px;">High</div><div class="val" style="left:544px;top:459px;width:36px"></div><div class="t" style="left:546px;top:463px;font-size:13px;width:30px;overflow:hidden;height:15px">15.00</div><div class="t" style="left:260px;top:491px;font-size:13.5px;">Trigger time:</div><div class="trk" style="left:357px;top:492px;width:134px"></div><div class="th" style="left:424px;top:489px"></div><div class="val" style="left:499px;top:488px;width:48px;height:19px"></div><div class="t" style="left:499px;top:491px;font-size:13px;width:48px;text-align:right;padding-right:4px">05:00</div><div class="t" style="left:553px;top:491px;font-size:13.5px;">min</div><div class="t" style="left:260px;top:517px;font-size:13.5px;">Release time:</div><div class="trk" style="left:357px;top:518px;width:134px"></div><div class="th" style="left:424px;top:515px"></div><div class="val" style="left:499px;top:514px;width:48px;height:19px"></div><div class="t" style="left:499px;top:517px;font-size:13px;width:48px;text-align:right;padding-right:4px">05:00</div><div class="t" style="left:553px;top:517px;font-size:13.5px;">min</div><div class="btn" style="left:363px;top:539px;width:102px;height:24px"></div><div class="led red" style="left:368px;top:543px;width:6px;height:15px"></div><div class="t" style="left:373px;top:545px;font-size:13.5px;width:92px;text-align:center;">Email</div><div class="btn" style="left:471px;top:539px;width:102px;height:24px"></div><div class="led red" style="left:476px;top:543px;width:6px;height:15px"></div><div class="t" style="left:481px;top:545px;font-size:13.5px;width:92px;text-align:center;">SNMP</div><div class="fs" style="left:596px;top:346px"></div><div class="t" style="left:606px;top:337px;font-size:13.5px;background:#fff;color:#0a0aff;padding:0 4px 0 6px;line-height:14px;">CDNR Alarm</div><div class="t" style="left:697px;top:356px;font-size:13.5px;">0</div><div class="t" style="left:755px;top:356px;font-size:13.5px;width:100px;text-align:center;">dB</div><div class="t" style="left:819px;top:356px;font-size:13.5px;width:100px;text-align:right;">120</div><div class="dots" style="left:700px;top:377px;width:209px"></div><div class="dots2" style="left:700px;top:378px;width:209px"></div><div class="t" style="left:602px;top:387px;font-size:13.5px;">Alarm:</div><div class="t" style="left:602px;top:439px;font-size:13.5px;">Warning:</div><div class="trk" style="left:699px;top:386px;width:213px"></div><div class="fill" style="left:735px;top:386px;width:141px"></div><div class="th" style="left:731px;top:383px"></div><div class="th" style="left:872px;top:383px"></div><div class="tri" style="left:797.0px;top:380px"></div><div class="btn" style="left:699px;top:407px;width:49px;height:19px"></div><div class="led red" style="left:704px;top:411px;width:6px;height:11px"></div><div class="t" style="left:715px;top:410px;font-size:13.5px;">Low</div><div class="val" style="left:752px;top:407px;width:36px"></div><div class="t" style="left:752px;top:411px;font-size:13px;width:36px;text-align:right;padding-right:4px;overflow:hidden;height:15px">20</div><div class="btn" style="left:833px;top:407px;width:49px;height:19px"></div><div class="led red" style="left:838px;top:411px;width:6px;height:11px"></div><div class="t" style="left:849px;top:410px;font-size:13.5px;">High</div><div class="val" style="left:886px;top:407px;width:36px"></div><div class="t" style="left:886px;top:411px;font-size:13px;width:36px;text-align:right;padding-right:4px;overflow:hidden;height:15px">100</div><div class="trk" style="left:699px;top:438px;width:213px"></div><div class="fill" style="left:788px;top:438px;width:53px"></div><div class="th" style="left:784px;top:435px"></div><div class="th" style="left:836px;top:435px"></div><div class="tri" style="left:797.0px;top:432px"></div><div class="btn" style="left:699px;top:459px;width:49px;height:19px"></div><div class="led red" style="left:704px;top:463px;width:6px;height:11px"></div><div class="t" style="left:715px;top:462px;font-size:13.5px;">Low</div><div class="val" style="left:752px;top:459px;width:36px"></div><div class="t" style="left:752px;top:463px;font-size:13px;width:36px;text-align:right;padding-right:4px;overflow:hidden;height:15px">50</div><div class="btn" style="left:833px;top:459px;width:49px;height:19px"></div><div class="led red" style="left:838px;top:463px;width:6px;height:11px"></div><div class="t" style="left:849px;top:462px;font-size:13.5px;">High</div><div class="val" style="left:886px;top:459px;width:36px"></div><div class="t" style="left:886px;top:463px;font-size:13px;width:36px;text-align:right;padding-right:4px;overflow:hidden;height:15px">80</div><div class="t" style="left:602px;top:491px;font-size:13.5px;">Trigger time:</div><div class="trk" style="left:699px;top:492px;width:134px"></div><div class="th" style="left:766px;top:489px"></div><div class="val" style="left:841px;top:488px;width:48px;height:19px"></div><div class="t" style="left:841px;top:491px;font-size:13px;width:48px;text-align:right;padding-right:4px">05:00</div><div class="t" style="left:895px;top:491px;font-size:13.5px;">min</div><div class="t" style="left:602px;top:517px;font-size:13.5px;">Release time:</div><div class="trk" style="left:699px;top:518px;width:134px"></div><div class="th" style="left:766px;top:515px"></div><div class="val" style="left:841px;top:514px;width:48px;height:19px"></div><div class="t" style="left:841px;top:517px;font-size:13px;width:48px;text-align:right;padding-right:4px">05:00</div><div class="t" style="left:895px;top:517px;font-size:13.5px;">min</div><div class="btn" style="left:705px;top:539px;width:102px;height:24px"></div><div class="led red" style="left:710px;top:543px;width:6px;height:15px"></div><div class="t" style="left:715px;top:545px;font-size:13.5px;width:92px;text-align:center;">Email</div><div class="btn" style="left:813px;top:539px;width:102px;height:24px"></div><div class="led red" style="left:818px;top:543px;width:6px;height:15px"></div><div class="t" style="left:823px;top:545px;font-size:13.5px;width:92px;text-align:center;">SNMP</div><div class="fs" style="left:254px;top:583px"></div><div class="t" style="left:264px;top:574px;font-size:13.5px;background:#fff;color:#0a0aff;padding:0 4px 0 6px;line-height:14px;">HD Radio Loss Alarm</div><div class="t" style="left:355px;top:593px;font-size:13.5px;">No Signal</div><div class="t" style="left:477px;top:593px;font-size:13.5px;width:100px;text-align:right;">OK</div><div class="dots" style="left:358px;top:614px;width:209px"></div><div class="dots2" style="left:358px;top:615px;width:209px"></div><div class="t" style="left:260px;top:624px;font-size:13.5px;">Alarm:</div><div class="tri" style="left:564.0px;top:607px"></div><div class="btn" style="left:357px;top:645px;width:70px;height:21px"></div><div class="led red" style="left:362px;top:648px;width:6px;height:15px"></div><div class="t" style="left:373px;top:649px;font-size:13.5px;letter-spacing:-0.4px">Enabled</div><div class="btn" style="left:431px;top:645px;width:72px;height:21px"></div><div class="led grn" style="left:436px;top:648px;width:6px;height:15px"></div><div class="t" style="left:447px;top:649px;font-size:13.5px;letter-spacing:-0.5px">Disabled</div><div class="t" style="left:260px;top:728px;font-size:13.5px;">Trigger time:</div><div class="trk" style="left:357px;top:729px;width:134px"></div><div class="th" style="left:424px;top:726px"></div><div class="val" style="left:499px;top:725px;width:48px;height:19px"></div><div class="t" style="left:499px;top:728px;font-size:13px;width:48px;text-align:right;padding-right:4px">05:00</div><div class="t" style="left:553px;top:728px;font-size:13.5px;">min</div><div class="t" style="left:260px;top:754px;font-size:13.5px;">Release time:</div><div class="trk" style="left:357px;top:755px;width:134px"></div><div class="th" style="left:424px;top:752px"></div><div class="val" style="left:499px;top:751px;width:48px;height:19px"></div><div class="t" style="left:499px;top:754px;font-size:13px;width:48px;text-align:right;padding-right:4px">05:00</div><div class="t" style="left:553px;top:754px;font-size:13.5px;">min</div><div class="btn" style="left:363px;top:776px;width:102px;height:24px"></div><div class="led red" style="left:368px;top:780px;width:6px;height:15px"></div><div class="t" style="left:373px;top:782px;font-size:13.5px;width:92px;text-align:center;">Email</div><div class="btn" style="left:471px;top:776px;width:102px;height:24px"></div><div class="led red" style="left:476px;top:780px;width:6px;height:15px"></div><div class="t" style="left:481px;top:782px;font-size:13.5px;width:92px;text-align:center;">SNMP</div><div class="fs" style="left:596px;top:583px"></div><div class="t" style="left:606px;top:574px;font-size:13.5px;background:#fff;color:#0a0aff;padding:0 4px 0 6px;line-height:14px;">RF Alarm</div><div class="t" style="left:697px;top:593px;font-size:13.5px;">20</div><div class="t" style="left:755px;top:593px;font-size:13.5px;width:100px;text-align:center;">dBµV</div><div class="t" style="left:819px;top:593px;font-size:13.5px;width:100px;text-align:right;">110</div><div class="dots" style="left:700px;top:614px;width:209px"></div><div class="dots2" style="left:700px;top:615px;width:209px"></div><div class="t" style="left:602px;top:624px;font-size:13.5px;">Alarm:</div><div class="t" style="left:602px;top:676px;font-size:13.5px;">Warning:</div><div class="trk" style="left:699px;top:623px;width:213px"></div><div class="fill" style="left:711px;top:623px;width:118px"></div><div class="th" style="left:707px;top:620px"></div><div class="th" style="left:825px;top:620px"></div><div class="tri" style="left:817.0px;top:617px"></div><div class="btn" style="left:699px;top:644px;width:49px;height:19px"></div><div class="led grn" style="left:704px;top:648px;width:6px;height:11px"></div><div class="t" style="left:715px;top:647px;font-size:13.5px;">Low</div><div class="val" style="left:752px;top:644px;width:36px"></div><div class="t" style="left:752px;top:648px;font-size:13px;width:36px;text-align:right;padding-right:4px;overflow:hidden;height:15px">25</div><div class="btn" style="left:833px;top:644px;width:49px;height:19px"></div><div class="led red" style="left:838px;top:648px;width:6px;height:11px"></div><div class="t" style="left:849px;top:647px;font-size:13.5px;">High</div><div class="val" style="left:886px;top:644px;width:36px"></div><div class="t" style="left:886px;top:648px;font-size:13px;width:36px;text-align:right;padding-right:4px;overflow:hidden;height:15px">75</div><div class="trk" style="left:699px;top:675px;width:213px"></div><div class="fill" style="left:796px;top:675px;width:33px"></div><div class="th" style="left:792px;top:672px"></div><div class="th" style="left:825px;top:672px"></div><div class="tri" style="left:817.0px;top:669px"></div><div class="btn" style="left:699px;top:696px;width:49px;height:19px"></div><div class="led grn" style="left:704px;top:700px;width:6px;height:11px"></div><div class="t" style="left:715px;top:699px;font-size:13.5px;">Low</div><div class="val" style="left:752px;top:696px;width:36px"></div><div class="t" style="left:752px;top:700px;font-size:13px;width:36px;text-align:right;padding-right:4px;overflow:hidden;height:15px">61</div><div class="btn" style="left:833px;top:696px;width:49px;height:19px"></div><div class="led red" style="left:838px;top:700px;width:6px;height:11px"></div><div class="t" style="left:849px;top:699px;font-size:13.5px;">High</div><div class="val" style="left:886px;top:696px;width:36px"></div><div class="t" style="left:886px;top:700px;font-size:13px;width:36px;text-align:right;padding-right:4px;overflow:hidden;height:15px">75</div><div class="t" style="left:602px;top:728px;font-size:13.5px;">Trigger time:</div><div class="trk" style="left:699px;top:729px;width:134px"></div><div class="th" style="left:706px;top:726px"></div><div class="val" style="left:841px;top:725px;width:48px;height:19px"></div><div class="t" style="left:841px;top:728px;font-size:13px;width:48px;text-align:right;padding-right:4px">00:10</div><div class="t" style="left:895px;top:728px;font-size:13.5px;">min</div><div class="t" style="left:602px;top:754px;font-size:13.5px;">Release time:</div><div class="trk" style="left:699px;top:755px;width:134px"></div><div class="th" style="left:706px;top:752px"></div><div class="val" style="left:841px;top:751px;width:48px;height:19px"></div><div class="t" style="left:841px;top:754px;font-size:13px;width:48px;text-align:right;padding-right:4px">00:10</div><div class="t" style="left:895px;top:754px;font-size:13.5px;">min</div><div class="btn" style="left:705px;top:776px;width:102px;height:24px"></div><div class="led red" style="left:710px;top:780px;width:6px;height:15px"></div><div class="t" style="left:715px;top:782px;font-size:13.5px;width:92px;text-align:center;">Email</div><div class="btn" style="left:813px;top:776px;width:102px;height:24px"></div><div class="led red" style="left:818px;top:780px;width:6px;height:15px"></div><div class="t" style="left:823px;top:782px;font-size:13.5px;width:92px;text-align:center;">SNMP</div>
</body></html>
